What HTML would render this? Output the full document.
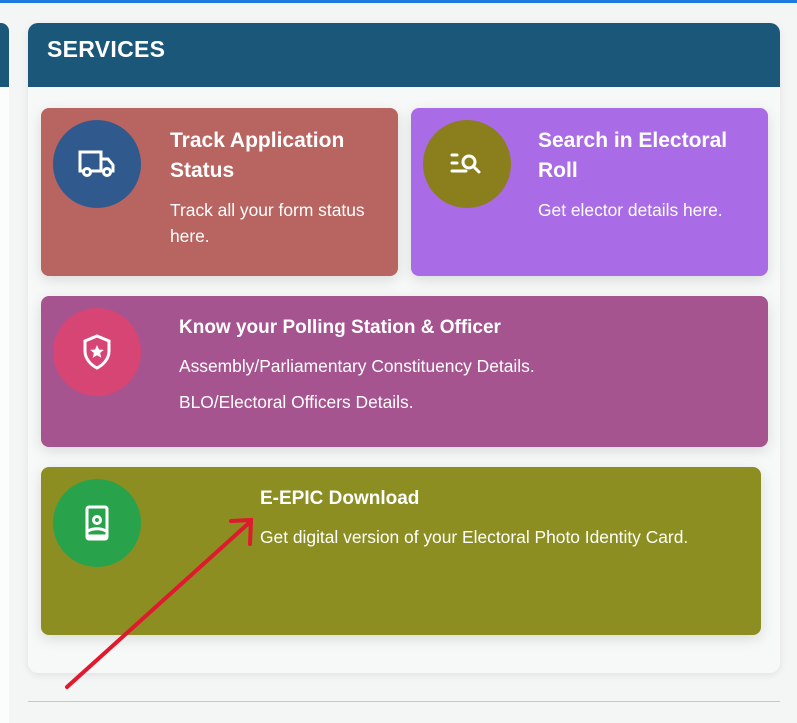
<!DOCTYPE html>
<html><head><meta charset="utf-8"><style>
*{margin:0;padding:0;box-sizing:border-box}
body{width:797px;height:709px;background:#f4f5f5;position:relative;overflow:hidden;font-family:"Liberation Sans",sans-serif;color:#fff}
.top{position:absolute;left:0;top:0;width:797px;height:3px;background:#1f7ae0}
.lp{position:absolute;left:-10px;top:23px;width:19px;height:700px;background:#fbfcfc;border-radius:0 8px 0 0}
.lph{position:absolute;left:-10px;top:23px;width:19px;height:64px;background:#1a5779;border-radius:0 8px 0 0}
.main{position:absolute;left:28px;top:23px;width:752px;height:650px;background:#f7f9f8;border-radius:10px;box-shadow:0 2px 8px rgba(0,0,0,.08);overflow:hidden}
.hd{height:64px;background:#1a5779;padding:13px 0 0 19px;font-size:23px;font-weight:bold;letter-spacing:.3px}
.c{position:absolute;border-radius:8px;box-shadow:0 4px 14px rgba(0,0,0,.12)}
.ci{position:absolute;width:88px;height:88px;border-radius:50%;display:flex;align-items:center;justify-content:center}
.t{position:absolute;font-weight:bold;font-size:21px;line-height:30px}
.d{position:absolute;font-size:17.4px;line-height:26px}
.line{position:absolute;left:28px;top:701px;width:752px;height:1px;background:#c8c8c8}
</style></head><body>
<div class="top"></div>
<div class="lp"></div><div class="lph"></div>
<div class="main"><div class="hd">SERVICES</div></div>
<div class="c" style="left:41px;top:108px;width:357px;height:168px;background:#b86461">
 <div class="ci" style="left:12px;top:12px;background:#30598e"><svg width="38" height="30" viewBox="0 0 38 30" fill="none" stroke="#fff" stroke-width="3"><path d="M2 3h21v19H2z M23 10h7l5 6v6H23"/><circle cx="9" cy="23" r="3.5" fill="#30598e"/><circle cx="29" cy="23" r="3.5" fill="#30598e"/></svg></div>
 <div class="t" style="left:129px;top:18px">Track Application<br>Status</div>
 <div class="d" style="left:129px;top:89px">Track all your form status<br>here.</div>
</div>
<div class="c" style="left:411px;top:108px;width:357px;height:168px;background:#a96ce6">
 <div class="ci" style="left:12px;top:12px;background:#8a7f1c"><svg width="34" height="24" viewBox="0 0 34 24" fill="none" stroke="#fff" stroke-width="3" stroke-linecap="round"><path d="M2 3h5M2 11h5M2 19h14"/><circle cx="19" cy="10" r="6"/><path d="M24 15l5 5"/></svg></div>
 <div class="t" style="left:127px;top:18px">Search in Electoral<br>Roll</div>
 <div class="d" style="left:127px;top:89px">Get elector details here.</div>
</div>
<div class="c" style="left:41px;top:296px;width:727px;height:151px;background:#a6548f">
 <div class="ci" style="left:12px;top:12px;background:#d64574"><svg width="30" height="36" viewBox="0 0 30 36" fill="none" stroke="#fff" stroke-width="3"><path d="M15 2L27 7v10c0 8-6 14-12 17C9 31 3 25 3 17V7z"/><path d="M15 11l2 4.5 4.8.4-3.7 3.1 1.2 4.8L15 21.3 10.7 23.8l1.2-4.8-3.7-3.1 4.8-.4z" fill="#fff" stroke="none"/></svg></div>
 <div class="t" style="left:138px;top:17px;font-size:19px">Know your Polling Station &amp; Officer</div>
 <div class="d" style="left:138px;top:57px">Assembly/Parliamentary Constituency Details.</div>
 <div class="d" style="left:138px;top:93px">BLO/Electoral Officers Details.</div>
</div>
<div class="c" style="left:41px;top:467px;width:720px;height:168px;background:#8c8e22">
 <div class="ci" style="left:12px;top:12px;background:#29a34b"><svg width="26" height="36" viewBox="0 0 26 36" fill="none" stroke="#fff" stroke-width="3"><rect x="3" y="2" width="20" height="32" rx="2"/><circle cx="13" cy="15" r="3.5"/><path d="M4 26c5-3 13-3 18 0M4 31h18"/></svg></div>
 <div class="t" style="left:219px;top:17px;font-size:19px">E-EPIC Download</div>
 <div class="d" style="left:219px;top:57px">Get digital version of your Electoral Photo Identity Card.</div>
</div>
<div class="line"></div>
<svg style="position:absolute;left:0;top:0" width="797" height="709"><g stroke="#e0192e" stroke-width="4" stroke-linecap="round" fill="none"><path d="M67 687L250 522"/><path d="M231 521L251 520L250 544"/></g></svg>
</body></html>
